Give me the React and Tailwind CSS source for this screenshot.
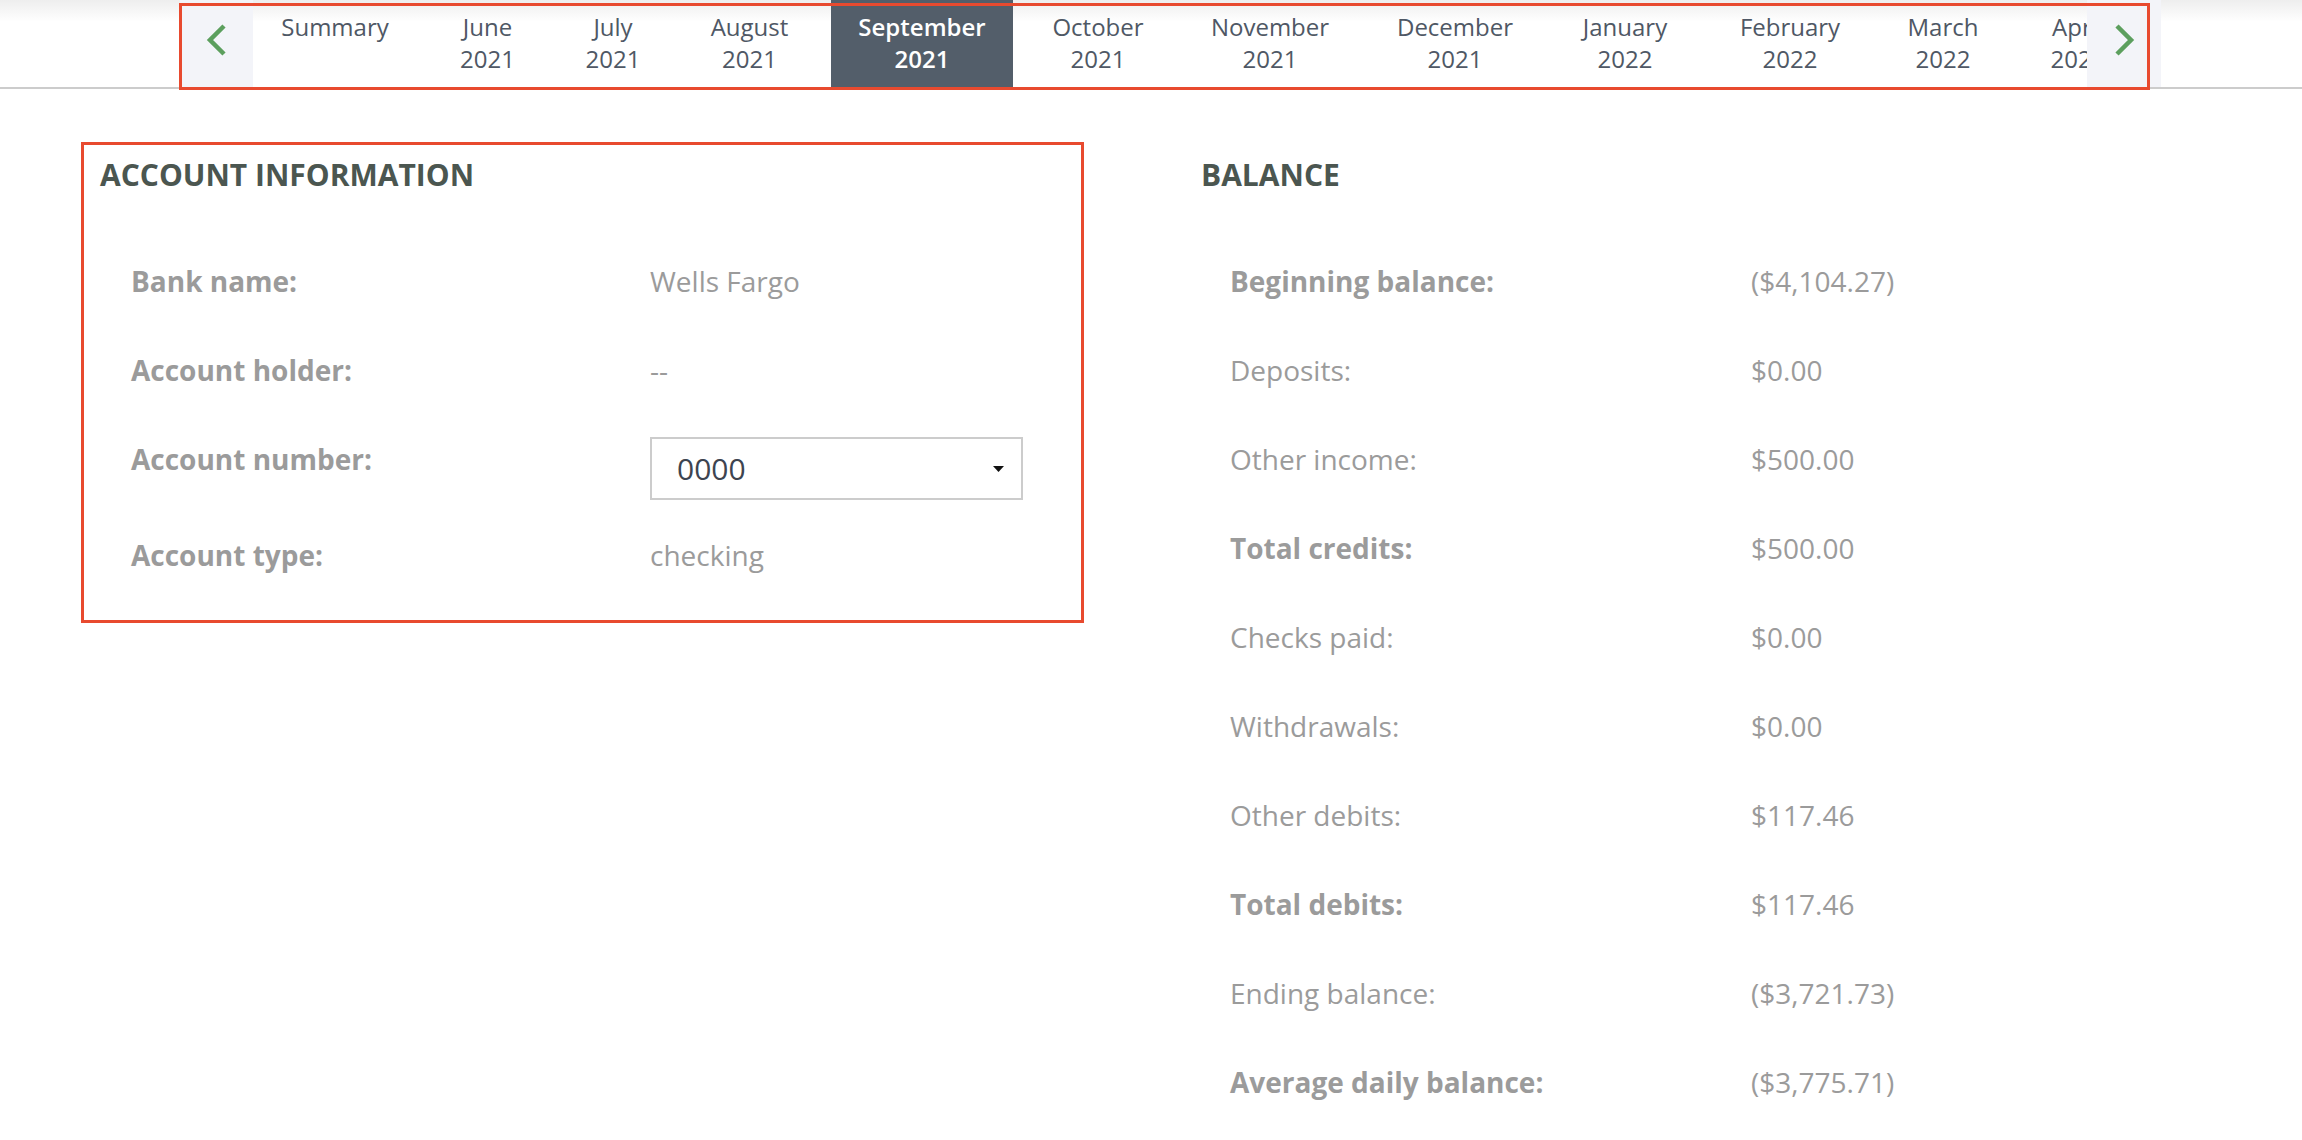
import React from 'react';

const tabs = [
    { month: 'Summary', year: '', w: 'w-[164px]' },
    { month: 'June', year: '2021', w: 'w-[141px]' },
    { month: 'July', year: '2021', w: 'w-[110px]' },
    { month: 'August', year: '2021', w: 'w-[163px]' },
    { month: 'September', year: '2021', w: 'w-[182px]', active: true },
    { month: 'October', year: '2021', w: 'w-[170px]' },
    { month: 'November', year: '2021', w: 'w-[174px]' },
    { month: 'December', year: '2021', w: 'w-[196px]' },
    { month: 'January', year: '2022', w: 'w-[144px]' },
    { month: 'February', year: '2022', w: 'w-[186px]' },
    { month: 'March', year: '2022', w: 'w-[120px]' },
    { month: 'April', year: '2022', w: 'w-[150px]' },
];

const balance = [
    { label: 'Beginning balance:', value: '($4,104.27)', bold: true },
    { label: 'Deposits:', value: '$0.00' },
    { label: 'Other income:', value: '$500.00' },
    { label: 'Total credits:', value: '$500.00', bold: true },
    { label: 'Checks paid:', value: '$0.00' },
    { label: 'Withdrawals:', value: '$0.00' },
    { label: 'Other debits:', value: '$117.46' },
    { label: 'Total debits:', value: '$117.46', bold: true },
    { label: 'Ending balance:', value: '($3,721.73)' },
    { label: 'Average daily balance:', value: '($3,775.71)', bold: true },
];

const Chevron = ({ dir }) => (
    <svg width="22" height="34" viewBox="0 0 22 34" fill="none">
        <polyline
            points={dir === 'left' ? '18,3 4,17 18,31' : '4,3 18,17 4,31'}
            stroke="#5c9f5e"
            strokeWidth="4.5"
            strokeLinejoin="miter"
        />
    </svg>
);

const MonthTabs = () => (
    <header className="relative h-[89px] w-full border-b-2 border-[#cccccc] bg-linear-to-b from-[#eeeeee] to-white to-25%">
        <nav className="ml-[180px] flex h-[87px] w-[1981px]">
            <button className="flex w-[73px] shrink-0 justify-center bg-[#f3f4f9] pt-[23px]">
                <Chevron dir="left" />
            </button>
            <div className="flex flex-1 overflow-hidden">
                {tabs.map((t) => (
                    <div
                        key={t.month}
                        className={`${t.w} shrink-0 pt-[11px] text-center text-[24px] leading-[32px] ${
                            t.active ? 'bg-[#535e6a] font-semibold text-white' : 'text-[#4f5865]'
                        }`}
                    >
                        <div>{t.month}</div>
                        {t.year && <div>{t.year}</div>}
                    </div>
                ))}
            </div>
            <button className="flex w-[74px] shrink-0 justify-center bg-[#f3f4f9] pt-[23px]">
                <Chevron dir="right" />
            </button>
        </nav>
        {/* highlight frame drawn over the tab strip */}
        <div className="pointer-events-none absolute left-[179px] top-[3px] h-[87px] w-[1971px] border-[3px] border-[#e84a2f]" />
    </header>
);

const Row = ({ label, bold, labelW, children }) => (
    <div className="flex h-[89px] items-center">
        <div className={`${labelW} shrink-0 ${bold ? 'font-bold' : 'font-normal'}`}>{label}</div>
        <div>{children}</div>
    </div>
);

const AccountInformation = () => (
    <section className="w-[1003px] shrink-0 border-[3px] border-[#e84a2f] pl-[16px] pt-[12px] pb-[21px]">
        <h2 className="text-[30px] font-bold leading-[36px] text-[#4b5650]">ACCOUNT INFORMATION</h2>
        <div className="mt-[43px] pl-[31px] text-[28px] text-[#9b9b9b]">
            <Row label="Bank name:" bold labelW="w-[519px]">Wells Fargo</Row>
            <Row label="Account holder:" bold labelW="w-[519px]">--</Row>
            <div className="flex h-[96px] items-start">
                <div className="flex h-[89px] w-[519px] shrink-0 items-center font-bold">Account number:</div>
                <div className="pt-[23px]">
                    <div className="flex h-[63px] w-[373px] items-center justify-between border-2 border-[#cccccc] pl-[25px] pr-[17px]">
                        <span className="text-[30px] text-[#3d4450]">0000</span>
                        <svg width="11" height="6" viewBox="0 0 11 6">
                            <path d="M0 0h11L5.5 6z" fill="#111" />
                        </svg>
                    </div>
                </div>
            </div>
            <Row label="Account type:" bold labelW="w-[519px]">checking</Row>
        </div>
    </section>
);

const Balance = () => (
    <section className="ml-[98px] w-[1040px] border-[3px] border-transparent pl-[16px] pt-[12px]">
        <h2 className="text-[30px] font-bold leading-[36px] text-[#4b5650]">BALANCE</h2>
        <div className="mt-[43px] pl-[29px] text-[28px] text-[#9b9b9b]">
            {balance.map((b) => (
                <Row key={b.label} label={b.label} bold={b.bold} labelW="w-[521px]">
                    {b.value}
                </Row>
            ))}
        </div>
    </section>
);

export default function App() {
    return (
        <div className="min-h-screen bg-white" style={{ fontFamily: '"Open Sans", "Noto Sans", sans-serif' }}>
            <MonthTabs />
            <main className="flex items-start pl-[81px] pt-[53px]">
                <AccountInformation />
                <Balance />
            </main>
        </div>
    );
}
